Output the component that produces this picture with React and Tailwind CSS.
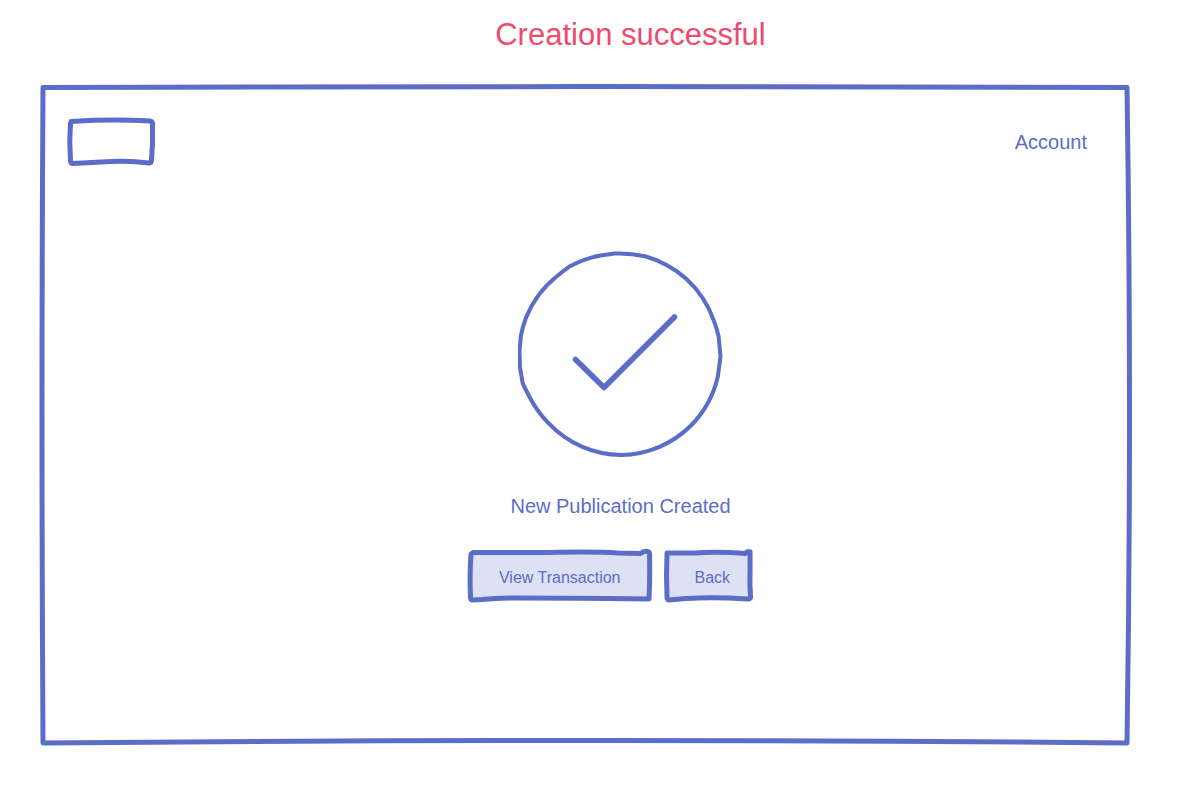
import React from "react";

// Hand-drawn outline that stretches with the box it decorates.
function SketchOutline({ viewBox, d, fill = "none" }) {
  return (
    <svg
      aria-hidden="true"
      className="pointer-events-none absolute inset-0 h-full w-full overflow-visible"
      viewBox={viewBox}
      preserveAspectRatio="none"
    >
      <path
        d={d}
        fill={fill}
        stroke="#5b6dc8"
        strokeWidth="5"
        strokeLinecap="round"
        strokeLinejoin="round"
        vectorEffect="non-scaling-stroke"
      />
    </svg>
  );
}

function SuccessMark() {
  return (
    <svg
      role="img"
      aria-label="Success"
      className="h-[206px] w-[206px]"
      viewBox="0 0 206 206"
      fill="none"
      stroke="#5b6dc8"
      strokeLinecap="round"
      strokeLinejoin="round"
    >
      <path
        strokeWidth="4"
        d="M97 2.500 A120 120 0 0 1 127 5.200 A104 104 0 0 1 168.500 28 A104 104 0 0 1 196 70 A104 104 0 0 1 200.700 86 L202.500 105.700 L199.800 125.700 A102 102 0 0 1 173 174.500 A101 101 0 0 1 103 204 A101 101 0 0 1 31 172.700 A110 110 0 0 1 11 145 L4.700 132.300 L2 116.300 L1.500 100.700 L2.800 85.700 A101 101 0 0 1 7.800 67.300 A101 101 0 0 1 39.200 25 Q45 20 51 15.800 A101 101 0 0 1 82.500 4.500 Z"
      />
      <path strokeWidth="5.500" d="M57.500 108.500 L86 136.500 L156.500 66" />
    </svg>
  );
}

export default function App() {
  return (
    <div className="min-h-screen bg-white pb-10 font-['Liberation_Sans',Arial,sans-serif] text-[#5b6dc8]">
      <h1 className="pt-[17px] pl-[75px] text-center text-[31px] leading-9 text-[#ef4b6c]">
        Creation successful
      </h1>

      <main className="relative mt-8 mr-[54px] ml-10 pb-36">
        <SketchOutline
          viewBox="0 0 1092 661"
          d="M3 2.500 Q545 0.500 1087 2.500 Q1092 330 1087 658 Q545 653 3 658 Q1 330 3 2.500 Z"
        />

        <header className="relative flex items-center justify-between pt-[33px] pr-[45px] pl-[27px]">
          <div className="relative h-[47px] w-[88px]">
            <SketchOutline
              viewBox="0 0 88 47"
              d="M4 3.500 Q44 1 83 3 Q86 3.500 85.500 7 Q86 25 84.500 42 Q84.500 45.500 82 45 Q64 42.500 44 43.500 L6 45.500 Q3.500 45.500 3.500 42 Q2 24 3.500 6 Z"
            />
          </div>
          <a href="#account" className="text-xl">
            Account
          </a>
        </header>

        <section className="relative mt-[86px] flex flex-col items-center pl-[69px]">
          <SuccessMark />
          <h2 className="mt-[35px] text-xl">New Publication Created</h2>
          <div className="mt-[30px] mr-5 flex gap-[13px]">
            <button
              type="button"
              className="relative h-[52px] cursor-pointer px-[31px] pt-1"
            >
              <SketchOutline
                viewBox="0 0 184 52"
                fill="#dee1f3"
                d="M5 2.500 L80 2.500 Q130 1.500 150 3 L173 3.500 Q176 0.500 180 1.500 Q182.500 2 182 6 Q182.500 25 181.500 49 L140 48.500 Q90 48 50 48 Q30 48 14 49.500 L5 50 Q2.500 50 2.500 47 Q1.500 24 3 4 Z"
              />
              <span className="relative">View Transaction</span>
            </button>
            <button
              type="button"
              className="relative h-[52px] cursor-pointer pt-1 pr-[23px] pl-[30px]"
            >
              <SketchOutline
                viewBox="0 0 88 52"
                fill="#dee1f3"
                d="M3 3 L30 3 Q55 1.500 81 3.500 Q83 0.500 85.500 2 L85.500 20 Q85 35 86 47 Q86 49.500 83 49 Q50 47 22 48.500 L5 50 Q3 50 3 47 Q2 26 3 3 Z"
              />
              <span className="relative">Back</span>
            </button>
          </div>
        </section>
      </main>
    </div>
  );
}
